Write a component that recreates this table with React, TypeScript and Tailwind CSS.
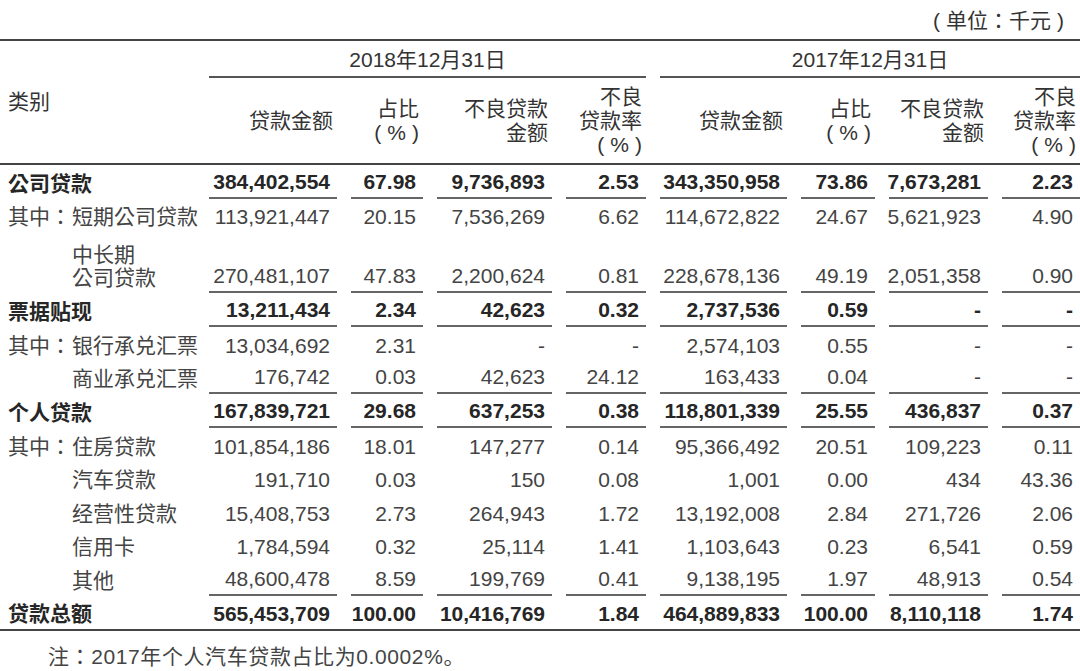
import React from "react";
import clsx from "clsx";

interface Row {
  label: string[];
  prefix?: boolean;
  indent?: boolean;
  bold?: boolean;
  underline?: boolean;
  h: string;
  vals: string[];
}

const cols =
  "grid grid-cols-[209px_128px_86px_129px_94px_141px_88px_113px_92px]";

const rows: Row[] = [
  { label: ["公司贷款"], bold: true, underline: true, h: "h-[34px]", vals: ["384,402,554", "67.98", "9,736,893", "2.53", "343,350,958", "73.86", "7,673,281", "2.23"] },
  { label: ["短期公司贷款"], prefix: true, h: "h-[33px]", vals: ["113,921,447", "20.15", "7,536,269", "6.62", "114,672,822", "24.67", "5,621,923", "4.90"] },
  { label: ["中长期", "公司贷款"], indent: true, underline: true, h: "h-[61px]", vals: ["270,481,107", "47.83", "2,200,624", "0.81", "228,678,136", "49.19", "2,051,358", "0.90"] },
  { label: ["票据贴现"], bold: true, underline: true, h: "h-[34px]", vals: ["13,211,434", "2.34", "42,623", "0.32", "2,737,536", "0.59", "-", "-"] },
  { label: ["银行承兑汇票"], prefix: true, h: "h-[34px]", vals: ["13,034,692", "2.31", "-", "-", "2,574,103", "0.55", "-", "-"] },
  { label: ["商业承兑汇票"], indent: true, underline: true, h: "h-[33px]", vals: ["176,742", "0.03", "42,623", "24.12", "163,433", "0.04", "-", "-"] },
  { label: ["个人贷款"], bold: true, underline: true, h: "h-[34px]", vals: ["167,839,721", "29.68", "637,253", "0.38", "118,801,339", "25.55", "436,837", "0.37"] },
  { label: ["住房贷款"], prefix: true, h: "h-[34px]", vals: ["101,854,186", "18.01", "147,277", "0.14", "95,366,492", "20.51", "109,223", "0.11"] },
  { label: ["汽车贷款"], indent: true, h: "h-[33px]", vals: ["191,710", "0.03", "150", "0.08", "1,001", "0.00", "434", "43.36"] },
  { label: ["经营性贷款"], indent: true, h: "h-[34px]", vals: ["15,408,753", "2.73", "264,943", "1.72", "13,192,008", "2.84", "271,726", "2.06"] },
  { label: ["信用卡"], indent: true, h: "h-[33px]", vals: ["1,784,594", "0.32", "25,114", "1.41", "1,103,643", "0.23", "6,541", "0.59"] },
  { label: ["其他"], indent: true, underline: true, h: "h-[34px]", vals: ["48,600,478", "8.59", "199,769", "0.41", "9,138,195", "1.97", "48,913", "0.54"] },
  { label: ["贷款总额"], bold: true, h: "h-[33px]", vals: ["565,453,709", "100.00", "10,416,769", "1.84", "464,889,833", "100.00", "8,110,118", "1.74"] },
];

const PCT = "%%";

const heads: string[][] = [
  ["贷款金额"],
  ["占比", PCT],
  ["不良贷款", "金额"],
  ["不良", "贷款率", PCT],
];

const Paren = ({ children }: { children: React.ReactNode }) => (
  <span className="flex items-center">
    <span>(</span>
    <span className="mx-[6px]">{children}</span>
    <span>)</span>
  </span>
);

export default function App() {
  return (
    <div className="w-[1080px] h-[671px] bg-white text-[21px] text-[#333] font-['Liberation_Sans','Noto_Sans_CJK_TC',sans-serif]">
      <div className="h-[39px] flex items-center justify-end pr-[16px] pt-[2px]">
        <Paren>单位：千元</Paren>
      </div>

      {/* table header */}
      <div className={clsx(cols, "border-t-2 border-b-2 border-[#444]")}>
        <div className="row-span-2 flex items-center pl-[8px]">类别</div>
        <div className="col-span-4 h-[37px]">
          <div className="h-full flex items-center justify-center border-b-2 border-[#555] pt-[2px]">2018年12月31日</div>
        </div>
        <div className="col-span-4 h-[37px] pl-[14px]">
          <div className="h-full flex items-center justify-center border-b-2 border-[#555] pt-[2px]">2017年12月31日</div>
        </div>
        {[...heads, ...heads].map((h, i) => (
          <div key={i} className={clsx("h-[85px] flex flex-col justify-center items-end pr-[4px] leading-[24px]", i > 0 && "pl-[14px]")}>
            {h.map((t) =>
              t === PCT ? (
                <Paren key={t}>%</Paren>
              ) : (
                <span key={t}>{t}</span>
              )
            )}
          </div>
        ))}
      </div>

      {/* body */}
      <div className="border-b-2 border-[#444]">
        {rows.map((r, ri) => (
          <div key={ri} className={clsx(cols, r.h, r.bold ? "font-bold text-[#262626]" : "text-[#444]")}>
            <div className={clsx("flex items-end pb-[4px] leading-[23px] whitespace-nowrap", r.indent ? "pl-[72px]" : "pl-[8px]")}>
              {r.prefix && <span className="w-[64px] shrink-0">其中：</span>}
              <div className="flex flex-col">
                {r.label.map((t) => (
                  <span key={t}>{t}</span>
                ))}
              </div>
            </div>
            {r.vals.map((v, i) => (
              <div key={i} className={clsx("h-full", i > 0 && "pl-[14px]")}>
                <div className={clsx("h-full flex items-end justify-end pr-[7px] pb-[4px] leading-[23px]", r.underline && "border-b-2 border-[#666]")}>
                  {v}
                </div>
              </div>
            ))}
          </div>
        ))}
      </div>

      <div className="pl-[48px] pt-[9px] text-[#444] tracking-[0.6px]">
        注：2017年个人汽车贷款占比为0.0002%
        <span className="font-['Noto_Sans_CJK_SC',sans-serif]">。</span>
      </div>
    </div>
  );
}
